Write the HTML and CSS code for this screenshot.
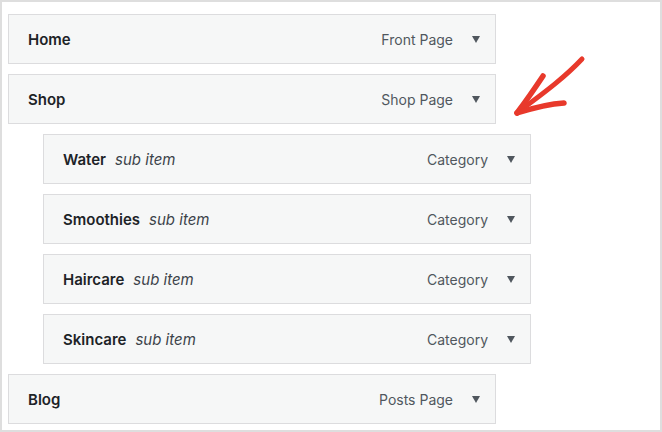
FILE: index.html
```html
<!DOCTYPE html>
<html>
<head>
<meta charset="utf-8">
<link rel="stylesheet" href="styles.css">
</head>
<body>
<div class="frame">
  <ul class="menu">
    <li class="item"><span class="title">Home</span><span class="type">Front Page</span><span class="caret"></span></li>
    <li class="item"><span class="title">Shop</span><span class="type">Shop Page</span><span class="caret"></span></li>
    <li class="item sub"><span class="title">Water</span><span class="note">sub item</span><span class="type">Category</span><span class="caret"></span></li>
    <li class="item sub"><span class="title">Smoothies</span><span class="note">sub item</span><span class="type">Category</span><span class="caret"></span></li>
    <li class="item sub"><span class="title">Haircare</span><span class="note">sub item</span><span class="type">Category</span><span class="caret"></span></li>
    <li class="item sub"><span class="title">Skincare</span><span class="note">sub item</span><span class="type">Category</span><span class="caret"></span></li>
    <li class="item"><span class="title">Blog</span><span class="type">Posts Page</span><span class="caret"></span></li>
  </ul>
  <svg class="arrow" width="662" height="432" viewBox="0 0 662 432">
    <g fill="none" stroke="#e8392b" stroke-linecap="round" stroke-linejoin="round">
      <path d="M582 59 C 566 76, 548 90, 518 112" stroke-width="5"/>
      <path d="M543 76 C 535 88, 526 101, 517 113" stroke-width="5.5"/>
      <path d="M564 103 C 548 104, 533 108, 517 113" stroke-width="5.5"/>
    </g>
  </svg>
</div>
</body>
</html>
```
FILE: styles.css
```css
html, body {
  margin: 0;
  padding: 0;
  background: #fff;
}
.frame {
  position: relative;
  box-sizing: border-box;
  width: 662px;
  height: 432px;
  border: 2px solid #dedede;
  padding: 12px 0 0 6px;
  font-family: Inter, "Noto Sans", sans-serif;
}
.menu {
  list-style: none;
  margin: 0;
  padding: 0;
  display: flex;
  flex-direction: column;
  gap: 10px;
}
.item {
  box-sizing: border-box;
  width: 488px;
  height: 50px;
  background: #f6f7f7;
  border: 1px solid #dcdcde;
  display: flex;
  align-items: center;
  padding: 0 15px 0 19px;
}
.item.sub {
  margin-left: 35px;
}
.title {
  font-size: 15px;
  font-weight: 600;
  color: #1d2327;
}
.note {
  margin-left: 9px;
  font-size: 15px;
  font-style: italic;
  color: #3c434a;
}
.type {
  margin-left: auto;
  font-size: 14px;
  color: #50575e;
}
.caret {
  width: 0;
  height: 0;
  margin-left: 19px;
  border-left: 4.5px solid transparent;
  border-right: 4.5px solid transparent;
  border-top: 7px solid #50575e;
}
.arrow {
  position: absolute;
  left: -2px;
  top: -2px;
}
```
